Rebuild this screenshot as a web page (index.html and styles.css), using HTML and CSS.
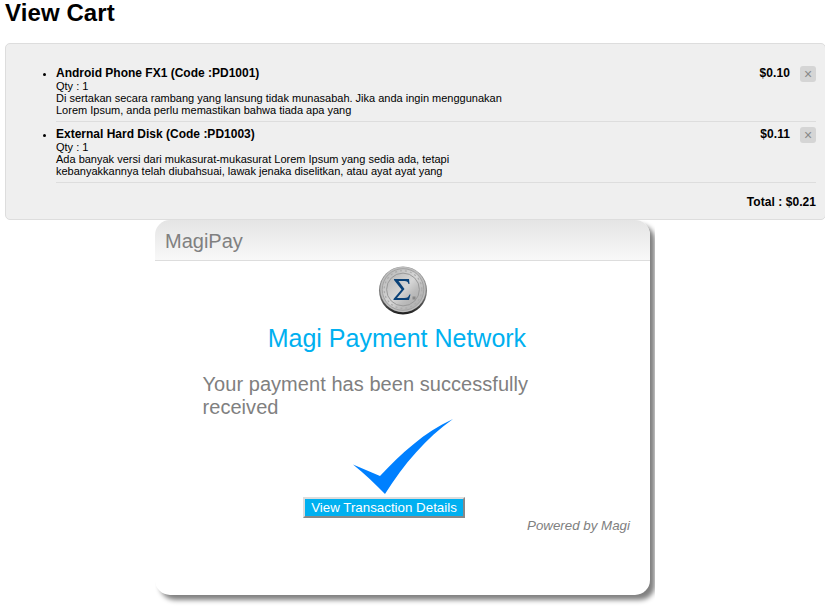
FILE: index.html
```html
<!DOCTYPE html>
<html lang="en">
<head>
<meta charset="utf-8">
<title>View Cart</title>
<link rel="stylesheet" href="styles.css">
</head>
<body>
<h1>View Cart</h1>
<section class="cart">
  <ul class="items">
    <li class="item">
      <a class="remove">×</a>
      <div class="price">$0.10</div>
      <div class="info">
        <h3>Android Phone FX1 (Code :PD1001)</h3>
        <div class="qty">Qty : 1</div>
        <div class="desc">Di sertakan secara rambang yang lansung tidak munasabah. Jika anda ingin menggunakan<br>Lorem Ipsum, anda perlu memastikan bahwa tiada apa yang</div>
      </div>
    </li>
    <li class="item">
      <a class="remove">×</a>
      <div class="price">$0.11</div>
      <div class="info">
        <h3>External Hard Disk (Code :PD1003)</h3>
        <div class="qty">Qty : 1</div>
        <div class="desc">Ada banyak versi dari mukasurat-mukasurat Lorem Ipsum yang sedia ada, tetapi<br>kebanyakkannya telah diubahsuai, lawak jenaka diselitkan, atau ayat ayat yang</div>
      </div>
    </li>
  </ul>
  <div class="total">Total : $0.21</div>
</section>
<div class="frame">
  <section class="pay">
    <header>MagiPay</header>
    <svg class="coin" width="50" height="50" viewBox="0 0 50 50">
      <defs>
        <linearGradient id="rim" x1="0" y1="0" x2="0" y2="1">
          <stop offset="0" stop-color="#999"/><stop offset=".6" stop-color="#777"/><stop offset="1" stop-color="#1c1c1c"/>
        </linearGradient>
        <linearGradient id="metal" x1="0" y1="0" x2="1" y2="1">
          <stop offset="0" stop-color="#b5b5b5"/><stop offset=".3" stop-color="#c9c9c9"/><stop offset=".5" stop-color="#d6d6d6"/><stop offset=".7" stop-color="#bcbcbc"/><stop offset="1" stop-color="#a9a9a9"/>
        </linearGradient>
      </defs>
      <circle cx="25" cy="25.5" r="24" fill="url(#rim)"/>
      <circle cx="25" cy="24.5" r="22.8" fill="#bdbdbd"/>
      <circle cx="25" cy="24.5" r="20.8" fill="url(#metal)" stroke="#a2a2a2"/>
      <circle cx="25" cy="24.5" r="18.8" fill="none" stroke="#aaa" stroke-width="1.2" stroke-dasharray="2 3"/>
      <circle cx="25" cy="24.5" r="16.4" fill="url(#metal)" stroke="#999"/>
      <path d="M16 14h15l.5 5h-1c-.6-2.200-1.500-3-4-3h-6l6 8-7.500 9h7.500c3 0 4-1 5-3.500h1l-1.500 5.500H15.500v-1l8-9.500L16 15z" fill="#0b4278"/>
      <path d="M34.500 31.500h3v3h-3z" fill="#888"/>
    </svg>
    <h2>Magi Payment Network</h2>
    <p class="message">Your payment has been successfully received</p>
    <svg class="check" width="100" height="76" viewBox="0 0 100 76"><path d="M0 45.500L27 57C49 34 70 14 100 0C73 19 51 45 32 75C22 65 12 55 0 45.500Z" fill="#0080ff"/></svg>
    <button class="details">View Transaction Details</button>
    <footer>Powered by Magi</footer>
  </section>
</div>
</body>
</html>
```

FILE: styles.css
```css
html { overflow: hidden; }
body {
  margin: 0;
  font-family: "Liberation Sans", Arial, sans-serif;
  font-size: 11px;
  color: #000;
  background: #fff;
}
h1, h2, h3, p, ul { margin: 0; }
h1 { font-size: 24px; line-height: 25px; padding: 0 5px; margin-bottom: 18px; letter-spacing: .1px; }
.cart {
  box-sizing: border-box;
  width: 821px;
  height: 177px;
  margin-left: 5px;
  padding: 22px 9px 0 10px;
  border: 1px solid #ddd;
  border-radius: 5px;
  background: #efefef;
}
.items { padding-left: 40px; }
.item { height: 55px; border-bottom: 1px solid #ddd; margin-bottom: 5px; }
.info { width: 500px; }
h3 { font-size: 12px; line-height: 14px; }
.qty { line-height: 12px; }
.desc { line-height: 12px; }
.remove {
  float: right;
  width: 16px;
  height: 16px;
  border-radius: 3px;
  background: #d5d5d5;
  color: #888;
  font-size: 14px;
  line-height: 16px;
  text-align: center;
}
.price {
  float: right;
  margin-right: 10px;
  font-size: 12px;
  font-weight: bold;
  line-height: 14px;
  letter-spacing: .08px;
}
.total { padding-top: 7px; font-size: 12px; font-weight: bold; line-height: 14px; text-align: right; letter-spacing: .06px; }
.frame { width: 500px; height: 389px; margin-left: 155px; overflow: hidden; }
.pay {
  display: flex;
  flex-direction: column;
  width: 495px;
  height: 375px;
  border-radius: 15px;
  background: #fff;
  box-shadow: 5px 5px 5px #808080;
}
header {
  box-sizing: border-box;
  height: 41px;
  padding: 0 10px;
  border-bottom: 1px solid #ddd;
  border-radius: 15px 15px 0 0;
  background: linear-gradient(#e4e4e4, #f8f8f8);
  color: #808080;
  font-size: 20px;
  line-height: 42px;
}
.coin { margin: 4px 0 0 223px; }
h2 { margin: 8px 0 0 112.700px; color: #00b0f0; font-size: 25px; font-weight: normal; line-height: 30px; }
.message { width: 350px; margin: 20px 0 0 47.500px; color: #808080; font-size: 20px; line-height: 23px; letter-spacing: .05px; }
.check { margin: 0 0 0 198px; }
.details {
  width: 162px;
  height: 21px;
  margin: 2px 0 0 148px;
  padding: 0;
  border: 2px solid;
  border-color: #ddd #888 #888 #ddd;
  background: #00b0f0;
  color: #fff;
  font: 13.333px/15px "Liberation Sans", Arial, sans-serif;
}
footer { margin: 0 20px 0 0; color: #808080; font-size: 13.333px; font-style: italic; line-height: 15px; text-align: right; }
```
